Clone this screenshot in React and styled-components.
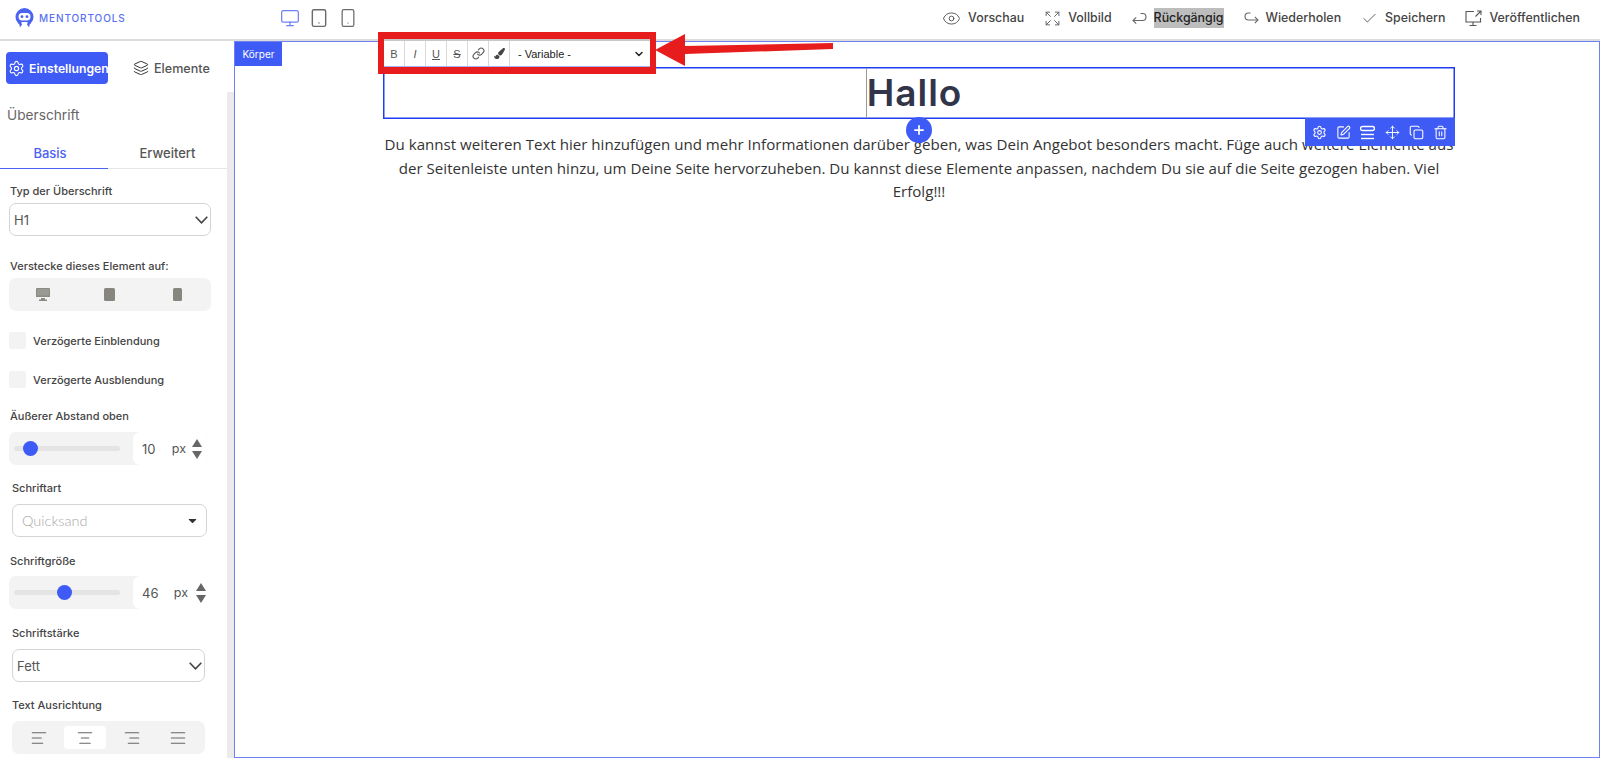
import React from "react";
import styled, { createGlobalStyle } from "styled-components";
import {
  Monitor,
  Tablet,
  Smartphone,
  Eye,
  Expand,
  Check,
  Settings,
  Layers,
  SquarePen,
  Move,
  Copy,
  Trash2,
  ChevronDown,
  Link,
  Plus,
  AlignLeft,
  AlignCenter,
  AlignRight,
  AlignJustify,
} from "lucide-react";
import { FaPaintBrush, FaCaretDown } from "react-icons/fa";

const GlobalStyle = createGlobalStyle`
  html, body {
    margin: 0;
    height: 100%;
    overflow: hidden;
    background: #fff;
    font-family: Inter, "Liberation Sans", sans-serif;
  }
  * {
    box-sizing: border-box;
  }
`;

const blue = "#3f5bf6";

const Page = styled.div`
  width: 1600px;
  height: 758px;
  display: flex;
  flex-direction: column;
  position: relative;
  overflow: hidden;
`;

const TopBar = styled.header`
  height: 41px;
  flex: none;
  display: flex;
  align-items: center;
  padding: 0 20px 3px 15px;
  border-bottom: 2px solid #dcdcdc;
`;

const Logo = styled.div`
  display: flex;
  align-items: center;
  gap: 5px;
  width: 265px;
  color: #5a70f2;
  font-size: 10px;
  font-weight: 500;
  letter-spacing: 0.9px;
`;

const Devices = styled.div`
  display: flex;
  align-items: center;
  gap: 9px;
`;

const DeviceButton = styled.span`
  display: flex;
  color: ${(p) => (p.$active ? "#6f80f3" : "#6b6b6b")};
`;

const Actions = styled.nav`
  margin-left: auto;
  display: flex;
  align-items: center;
  gap: 20px;
`;

const ActionItem = styled.span`
  display: flex;
  align-items: center;
  gap: 7px;
  font-size: 12.4px;
  font-weight: 500;
  color: #444;
  white-space: nowrap;
`;

const ActionLabel = styled.span`
  line-height: 20px;
  background: ${(p) => (p.$selected ? "#bdbdbd" : "transparent")};
  color: ${(p) => (p.$selected ? "#222" : "inherit")};
`;

const Body = styled.div`
  flex: 1;
  display: flex;
  min-height: 0;
`;

const Sidebar = styled.aside`
  width: 227px;
  flex: none;
  padding-top: 11px;
`;

const ScrollTrack = styled.div`
  width: 7px;
  flex: none;
  margin-top: 51px;
  background: #ebebeb;
`;

const ModeTabs = styled.div`
  display: flex;
  align-items: center;
  padding-left: 6px;
  height: 32px;
`;

const ModeTab = styled.div`
  width: ${(p) => (p.$active ? "102px" : "auto")};
  height: 32px;
  margin-left: ${(p) => (p.$active ? "0" : "25px")};
  border-radius: 4px;
  display: flex;
  align-items: center;
  gap: ${(p) => (p.$active ? "4px" : "5px")};
  padding-left: ${(p) => (p.$active ? "2px" : "0")};
  white-space: nowrap;
  background: ${(p) => (p.$active ? blue : "transparent")};
  color: ${(p) => (p.$active ? "#fff" : "#555")};
  font-size: ${(p) => (p.$active ? "12.2px" : "12.6px")};
  font-weight: ${(p) => (p.$active ? 600 : 500)};

  svg {
    flex: none;
  }
`;

const PanelTitle = styled.div`
  margin: 21px 0 0 7px;
  line-height: 20px;
  font-size: 13.7px;
  color: #666;
`;

const SubTabs = styled.div`
  display: flex;
  margin-top: 18px;
  height: 26px;
  border-bottom: 1px solid #e6e6e6;
`;

const SubTab = styled.div`
  width: 108px;
  text-align: center;
  line-height: 20px;
  font-size: 13px;
  font-weight: 500;
  margin-bottom: -1px;
  padding-right: ${(p) => (p.$active ? "8px" : "0")};
  flex: ${(p) => (p.$active ? "none" : "1")};
  color: ${(p) => (p.$active ? "#4a63f0" : "#555")};
  border-bottom: 1px solid ${(p) => (p.$active ? "#4a63f0" : "transparent")};
`;

const Field = styled.div`
  margin: ${(p) => p.$top}px 0 0 ${(p) => p.$left || 9}px;
  width: ${(p) => p.$width || 202}px;
`;

const Label = styled.div`
  font-size: 11px;
  font-weight: 500;
  line-height: 14px;
  color: #444;
  margin: 0 0 ${(p) => p.$gap || 9}px ${(p) => p.$shift ?? 1}px;
  white-space: nowrap;
`;

const SelectBox = styled.div`
  height: 33px;
  border: 1px solid #d4d4d4;
  border-radius: 7px;
  display: flex;
  align-items: center;
  justify-content: space-between;
  padding: 0 2px 0 4px;
  font-size: 13px;
  color: #555;
  background: #fff;
`;

const Placeholder = styled.span`
  font-family: Lato, sans-serif;
  font-weight: 300;
  font-size: 14.5px;
  color: #a8a8a8;
  margin-left: 5px;
`;

const Segmented = styled.div`
  height: 33px;
  background: #f3f3f3;
  border-radius: 7px;
  display: grid;
  grid-template-columns: repeat(${(p) => p.$count}, 1fr);
  align-items: center;
  justify-items: center;
  padding: 0 ${(p) => (p.$count === 4 ? 4 : 0)}px;
  color: #666;
`;

const SegmentCell = styled.span`
  display: flex;
  align-items: center;
  justify-content: center;
  width: 42px;
  height: 23px;
  border-radius: 4px;
  background: ${(p) => (p.$active ? "#fff" : "transparent")};
`;

const CheckRow = styled.div`
  margin: ${(p) => p.$top}px 0 0 9px;
  display: flex;
  align-items: center;
  gap: 7px;
  font-size: 11px;
  font-weight: 500;
  color: #444;
`;

const CheckBox = styled.span`
  width: 17px;
  height: 17px;
  background: #f3f3f3;
  border-radius: 2px;
`;

const SliderBox = styled.div`
  height: 33px;
  background: #f3f3f3;
  border-radius: 7px;
  display: flex;
  align-items: center;
  padding-left: 5px;
`;

const SliderTrack = styled.div`
  width: 106px;
  height: 5px;
  border-radius: 3px;
  background: #e4e4e4;
  position: relative;
`;

const SliderThumb = styled.span`
  position: absolute;
  top: -5px;
  width: 15px;
  height: 15px;
  border-radius: 50%;
  background: ${blue};
`;

const NumberBox = styled.div`
  margin-left: 13px;
  flex: 1;
  height: 33px;
  background: #fff;
  border-radius: 7px;
  display: flex;
  align-items: center;
  padding-left: 9px;
  font-size: 13px;
  color: #555;
`;

const Unit = styled.span`
  margin-left: auto;
  margin-right: ${(p) => p.$gap}px;
  font-size: 12.5px;
`;

const Stepper = styled.span`
  display: flex;
  flex-direction: column;
  gap: 4px;
  margin-right: ${(p) => p.$right}px;
`;

const StepUp = styled.i`
  width: 0;
  height: 0;
  border: 5px solid transparent;
  border-top: 0;
  border-bottom: 8px solid #666;
`;

const StepDown = styled(StepUp)`
  border-bottom: 0;
  border-top: 8px solid #666;
`;

const Canvas = styled.main`
  flex: 1;
  position: relative;
  border: 1px solid #6f80f3;
  padding: 25px 0 0 148px;
`;

const Badge = styled.div`
  position: absolute;
  left: 0;
  top: 0;
  width: 47px;
  height: 24px;
  background: ${blue};
  color: #fff;
  font-size: 10px;
  display: flex;
  align-items: center;
  justify-content: center;
`;

const Column = styled.div`
  width: 1072px;
  position: relative;
`;

const HeadingBox = styled.div`
  height: 52px;
  border: 1px solid #1f3cf0;
  box-shadow: inset 0 0 0 0.5px #1f3cf0;
  padding-right: 10px;
  text-align: center;
  font-weight: 600;
  font-size: 37px;
  letter-spacing: 1px;
  line-height: 50px;
  color: #32344a;
`;

const Cursor = styled.span`
  display: inline-block;
  height: 50px;
  vertical-align: top;
  border-left: 1px solid #999;
`;

const Paragraph = styled.p`
  margin: 14px 0 0;
  text-align: center;
  font-family: "Open Sans", sans-serif;
  font-size: 15.1px;
  line-height: 23.5px;
  color: #333;
`;

const AddButton = styled.span`
  position: absolute;
  left: 523px;
  top: 50px;
  width: 26px;
  height: 26px;
  border-radius: 50%;
  background: ${blue};
  color: #fff;
  display: flex;
  align-items: center;
  justify-content: center;
`;

const ElementBar = styled.div`
  position: absolute;
  right: 0;
  top: 51px;
  width: 150px;
  height: 28px;
  background: ${blue};
  color: #fff;
  display: flex;
  align-items: center;
  justify-content: space-around;
  padding: 0 2px;
`;

const RedFrame = styled.div`
  position: absolute;
  left: 143px;
  top: -10px;
  width: 278px;
  height: 42px;
  border: 6px solid #e71d1d;
  border-width: 7px 6px;
  background: #fff;
`;

const FormatBar = styled.div`
  height: 28px;
  display: flex;
  border-top: 2px solid #c8c8c8;
  border-bottom: 1px solid #a5b0f0;
  font-family: "Liberation Sans", sans-serif;
  font-size: 11px;
  color: #555;
`;

const FormatCell = styled.span`
  width: 21px;
  display: flex;
  align-items: center;
  justify-content: center;
  border-right: 1px solid #d8d8d8;
  font-style: ${(p) => (p.$italic ? "italic" : "normal")};
  text-decoration: ${(p) => p.$deco || "none"};
`;

const VariableSelect = styled.span`
  flex: 1;
  display: flex;
  align-items: center;
  justify-content: space-between;
  padding: 0 5px 0 8px;
  color: #222;
`;

const ArrowShape = styled.svg`
  position: absolute;
  left: 420px;
  top: -9px;
`;

const BotLogo = () => (
  <svg width="19" height="20" viewBox="0 0 19 20">
    <circle cx="9.5" cy="9" r="9" fill="#4a63f0" />
    <rect x="3.5" y="5" width="12" height="7.5" rx="3.7" fill="#fff" />
    <circle cx="7" cy="8.700" r="1.400" fill="#4a63f0" />
    <circle cx="12" cy="8.700" r="1.400" fill="#4a63f0" />
    <rect x="6.500" y="14" width="6" height="6" fill="#fff" />
    <path d="M4 15l3 1-2 3.500zM15 15l-3 1 2 3.500z" fill="#4a63f0" />
  </svg>
);

const RowsIcon = () => (
  <svg width="15" height="15" viewBox="0 0 15 15" fill="none" stroke="#fff" strokeWidth="1.4">
    <path d="M1 13.500h13" />
    <path d="M2.500 1.500h10a2 2 0 0 1 0 4h-10a2 2 0 0 1 0-4z" />
    <path d="M1 9.500h13" />
  </svg>
);

const UndoIcon = () => (
  <svg width="15" height="16" viewBox="0 0 15 16" fill="none" stroke="#666" strokeWidth="1.1">
    <path d="M1 10.500h9.500a3.500 3.500 0 0 0 0-7H8.500" />
    <path d="M4.200 7.300L1 10.500l3.200 3.200" />
  </svg>
);

const RedoIcon = () => (
  <svg width="15" height="16" viewBox="0 0 15 16" fill="none" stroke="#666" strokeWidth="1.1">
    <path d="M6.500 3H4.500a3.500 3.500 0 0 0 0 7H14" />
    <path d="M10.800 6.800L14 10l-3.200 3.200" />
  </svg>
);

const PublishIcon = () => (
  <svg width="17" height="17" viewBox="0 0 17 17" fill="none" stroke="#555" strokeWidth="1.1">
    <path d="M9 1.500H1v10.500h14.500V8" />
    <path d="M8 12v3M4.500 15.500h7" />
    <path d="M10.500 6.500l5-5M12 1h4v4" />
  </svg>
);

const SelectChevron = () => (
  <svg width="13" height="8" viewBox="0 0 13 8" fill="none" stroke="#444" strokeWidth="1.6">
    <path d="M0.700 0.800L6.500 6.800l5.800-6" />
  </svg>
);

const HideDesktop = () => (
  <svg width="14" height="13" viewBox="0 0 14 13">
    <path d="M1 0h12a1 1 0 0 1 1 1v8H0V1a1 1 0 0 1 1-1z" fill="#8b8b84" />
    <rect x="1" y="1" width="12" height="6.500" fill="#9a9a94" />
    <path d="M5 10h4v1.500h2V13H3v-1.500h2z" fill="#8b8b84" />
  </svg>
);

const HideDevice = ({ w }) => (
  <svg width={w} height="13" viewBox={`0 0 ${w} 13`}>
    <rect width={w} height="13" rx="1.500" fill="#86867e" />
  </svg>
);

const actions = [
  { label: "Vorschau", icon: <Eye size={19} strokeWidth={1.2} color="#555" /> },
  { label: "Vollbild", icon: <Expand size={17} strokeWidth={1.4} color="#666" /> },
  { label: "Rückgängig", icon: <UndoIcon />, selected: true },
  { label: "Wiederholen", icon: <RedoIcon /> },
  { label: "Speichern", icon: <Check size={17} strokeWidth={1.3} color="#555" /> },
  { label: "Veröffentlichen", icon: <PublishIcon /> },
];

const Slider = ({ value, thumb, unitGap, stepRight }) => (
  <SliderBox>
    <SliderTrack>
      <SliderThumb style={{ left: thumb }} />
    </SliderTrack>
    <NumberBox>
      {value}
      <Unit $gap={unitGap}>px</Unit>
      <Stepper $right={stepRight}>
        <StepUp />
        <StepDown />
      </Stepper>
    </NumberBox>
  </SliderBox>
);

export default function App() {
  return (
    <Page>
      <GlobalStyle />
      <TopBar>
        <Logo>
          <BotLogo />
          MENTORTOOLS
        </Logo>
        <Devices>
          <DeviceButton $active>
            <Monitor size={20} strokeWidth={1.5} />
          </DeviceButton>
          <DeviceButton>
            <Tablet size={20} strokeWidth={1.7} />
          </DeviceButton>
          <DeviceButton>
            <Smartphone size={20} strokeWidth={1.5} />
          </DeviceButton>
        </Devices>
        <Actions>
          {actions.map((a) => (
            <ActionItem key={a.label}>
              {a.icon}
              <ActionLabel $selected={a.selected}>{a.label}</ActionLabel>
            </ActionItem>
          ))}
        </Actions>
      </TopBar>
      <Body>
        <Sidebar>
          <ModeTabs>
            <ModeTab $active>
              <Settings size={17} strokeWidth={1.6} />
              Einstellungen
            </ModeTab>
            <ModeTab>
              <Layers size={16} strokeWidth={1.5} color="#333" />
              Elemente
            </ModeTab>
          </ModeTabs>
          <PanelTitle>Überschrift</PanelTitle>
          <SubTabs>
            <SubTab $active>Basis</SubTab>
            <SubTab>Erweitert</SubTab>
          </SubTabs>

          <Field $top={15}>
            <Label $gap={5}>Typ der Überschrift</Label>
            <SelectBox>
              H1
              <SelectChevron />
            </SelectBox>
          </Field>

          <Field $top={23}>
            <Label $gap={5}>Verstecke dieses Element auf:</Label>
            <Segmented $count={3}>
              <HideDesktop />
              <HideDevice w={11} />
              <HideDevice w={9} />
            </Segmented>
          </Field>

          <CheckRow $top={21}>
            <CheckBox />
            Verzögerte Einblendung
          </CheckRow>
          <CheckRow $top={22}>
            <CheckBox />
            Verzögerte Ausblendung
          </CheckRow>

          <Field $top={21} $width={199}>
            <Label>Äußerer Abstand oben</Label>
            <Slider value="10" thumb={9} unitGap={6} stepRight={6} />
          </Field>

          <Field $top={16} $left={12} $width={195}>
            <Label $shift={0}>Schriftart</Label>
            <SelectBox>
              <Placeholder>Quicksand</Placeholder>
              <FaCaretDown size={13} color="#333" style={{ marginRight: 5 }} />
            </SelectBox>
          </Field>

          <Field $top={17} $width={199}>
            <Label $gap={8}>Schriftgröße</Label>
            <Slider value="46" thumb={43} unitGap={8} stepRight={2} />
          </Field>

          <Field $top={17} $left={12} $width={193}>
            <Label $shift={0}>Schriftstärke</Label>
            <SelectBox>
              Fett
              <SelectChevron />
            </SelectBox>
          </Field>

          <Field $top={16} $left={12} $width={193}>
            <Label $shift={0}>Text Ausrichtung</Label>
            <Segmented $count={4}>
              <SegmentCell>
                <AlignLeft size={18} strokeWidth={1.4} />
              </SegmentCell>
              <SegmentCell $active>
                <AlignCenter size={18} strokeWidth={1.4} />
              </SegmentCell>
              <SegmentCell>
                <AlignRight size={18} strokeWidth={1.4} />
              </SegmentCell>
              <SegmentCell>
                <AlignJustify size={18} strokeWidth={1.4} />
              </SegmentCell>
            </Segmented>
          </Field>
        </Sidebar>
        <ScrollTrack />
        <Canvas>
          <Badge>Körper</Badge>
          <Column>
            <HeadingBox>
              <Cursor />
              Hallo
            </HeadingBox>
            <AddButton>
              <Plus size={14} strokeWidth={3} />
            </AddButton>
            <Paragraph>
              Du kannst weiteren Text hier hinzufügen und mehr Informationen darüber geben, was Dein
              Angebot besonders macht. Füge auch weitere Elemente aus der Seitenleiste unten hinzu,
              um Deine Seite hervorzuheben. Du kannst diese Elemente anpassen, nachdem Du sie auf die
              Seite gezogen haben. Viel Erfolg!!!
            </Paragraph>
            <ElementBar>
              <Settings size={15} strokeWidth={1.7} />
              <SquarePen size={15} strokeWidth={1.7} />
              <RowsIcon />
              <Move size={15} strokeWidth={1.5} />
              <Copy size={15} strokeWidth={1.7} />
              <Trash2 size={15} strokeWidth={1.7} />
            </ElementBar>
          </Column>
          <RedFrame>
            <FormatBar>
              <FormatCell>B</FormatCell>
              <FormatCell $italic>I</FormatCell>
              <FormatCell $deco="underline">U</FormatCell>
              <FormatCell $deco="line-through">S</FormatCell>
              <FormatCell>
                <Link size={13} color="#555" />
              </FormatCell>
              <FormatCell>
                <FaPaintBrush size={11} color="#444" />
              </FormatCell>
              <VariableSelect>
                - Variable -
                <ChevronDown size={12} strokeWidth={3} color="#222" />
              </VariableSelect>
            </FormatBar>
          </RedFrame>
          <ArrowShape width="180" height="36" viewBox="0 0 180 36">
            <path d="M0 17 L30 1 V13 L178 10 V16 L30 21 V33 Z" fill="#e71d1d" />
          </ArrowShape>
        </Canvas>
      </Body>
    </Page>
  );
}
